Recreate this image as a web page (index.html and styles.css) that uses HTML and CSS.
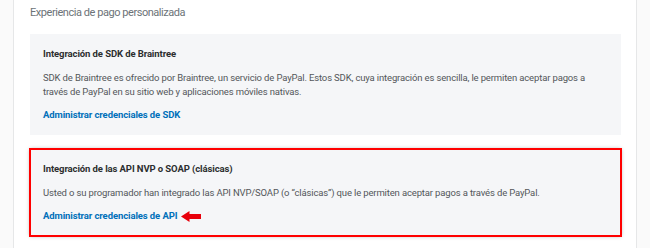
FILE: index.html
```html
<!DOCTYPE html>
<html lang="es">
<head>
    <meta charset="UTF-8">
    <meta name="viewport" content="width=device-width, initial-scale=1.0">
    <title>Experiencia de pago personalizada</title>
    <link rel="stylesheet" href="styles.css">
</head>
<body>
    <div class="panel">
        <h2 class="panel-title">Experiencia de pago personalizada</h2>

        <div class="card">
            <h3>Integración de SDK de Braintree</h3>
            <p>SDK de Braintree es ofrecido por Braintree, un servicio de PayPal. Estos SDK, cuya integración es sencilla, le permiten aceptar pagos a través de PayPal en su sitio web y aplicaciones móviles nativas.</p>
            <div class="link-row">
                <a href="#">Administrar credenciales de SDK</a>
            </div>
        </div>

        <div class="card marked">
            <h3>Integración de las API NVP o SOAP (clásicas)</h3>
            <p>Usted o su programador han integrado las API NVP/SOAP (o “clásicas”) que le permiten aceptar pagos a través de PayPal.</p>
            <div class="link-row">
                <a href="#">Administrar credenciales de API</a>
                <!-- red arrow pointing at the link -->
                <svg class="arrow" width="20" height="11" viewBox="0 0 20 11">
                    <path d="M0 5.5 L8.5 0 L8.5 3 L20 3 L20 8 L8.5 8 L8.5 11 Z" fill="#e8000b"/>
                </svg>
            </div>
        </div>
    </div>
</body>
</html>
```
FILE: styles.css
```css
body {
    margin: 0;
    background-color: #fafafa;
    font-family: Roboto, "Liberation Sans", sans-serif;
}
.panel {
    margin-left: 13px;
    width: 624px;
    height: 248px;
    box-sizing: border-box;
    background-color: white;
    border-left: 1px solid #e6e7e8;
    border-right: 1px solid #e6e7e8;
    padding: 4px 15px 0 16px;
}
.panel-title {
    margin: 0 0 13px 0;
    font-size: 11px;
    line-height: 17px;
    letter-spacing: -0.45px;
    font-weight: 400;
    color: #6c7378;
}
.card {
    background-color: #f5f6f8;
    padding: 13px 16px 13px 13px;
    margin-bottom: 14px;
}
.card h3 {
    margin: 0;
    font-size: 9.5px;
    line-height: 14px;
    letter-spacing: -0.1px;
    font-weight: 700;
    color: #2c2e2f;
}
.card p {
    margin: 10px 0 9px 0;
    font-size: 9.5px;
    line-height: 14px;
    letter-spacing: -0.15px;
    color: #53575a;
}
.card a {
    font-size: 9.5px;
    line-height: 14px;
    letter-spacing: -0.1px;
    font-weight: 700;
    color: #0070ba;
    text-decoration: none;
}
.marked {
    outline: 2px solid #f00;
    outline-offset: -1px;
    box-shadow: 0 0 4px rgba(0, 0, 0, 0.35);
}
.link-row {
    display: flex;
    align-items: center;
    gap: 4px;
}
.arrow {
    display: block;
}
```
